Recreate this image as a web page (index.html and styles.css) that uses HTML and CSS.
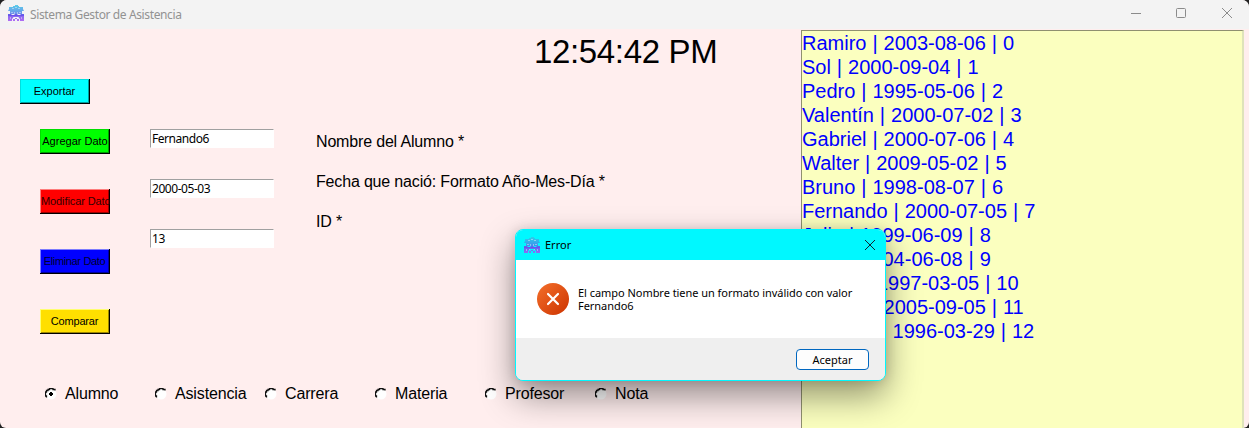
FILE: index.html
```
<!DOCTYPE html>
<html lang="es">
<head>
<meta charset="utf-8">
<title>Sistema Gestor de Asistencia</title>
<link rel="stylesheet" href="styles.css">
</head>
<body>
<svg class="defs" width="0" height="0" aria-hidden="true">
  <defs>
    <linearGradient id="roof" x1="0" y1="0" x2="0" y2="16" gradientUnits="userSpaceOnUse">
      <stop offset="0" stop-color="#35c5e5"/><stop offset=".5" stop-color="#4a80e8"/><stop offset=".65" stop-color="#6c50ec"/><stop offset="1" stop-color="#a555f4"/>
    </linearGradient>
    <linearGradient id="fail" x1="0" y1="0" x2="1" y2="1">
      <stop offset="0" stop-color="#f4702b"/><stop offset="1" stop-color="#cc3300"/>
    </linearGradient>
    <symbol id="house" viewBox="0 0 16 16">
      <g fill="url(#roof)">
        <path opacity=".8" d="M5 1h2V0h3v1h1v1h4v2l1 2h-2v3H2V6H0l1-2V2h4z"/>
        <path d="M0 9h3l1 1h2l1-1h2l1 1h2l1-1h3v2H0z"/>
        <path opacity=".85" d="M0 11h16v5h-4v-2l-2-2H6l-2 2v2H0z"/>
        <path opacity=".85" d="M5 14h2v2H5zM9 14h2v2H9zM7 13h2v1H7z"/>
      </g>
      <path fill="#fff" opacity=".4" d="M4 3h2v1H4zM10 3h2v1h-2zM7 2h2v1H7zM3 7h2v1H3zM6 7h1v2H6zM9 7h1v2H9zM11 7h2v1h-2zM2 12h1v2H2zM13 12h1v2h-1zM5 12h1v1H5zM10 12h1v1h-1z"/>
    </symbol>
    <symbol id="dial" viewBox="0 0 12 12">
      <circle cx="6" cy="6" r="5.500" fill="#fff"/>
      <path d="M1.5 9.500V8h-1V4h1V2.500H3V1.500h1.500V.7h3.500v.8h2v1" fill="none" stroke="#111" stroke-width="1.300"/>
    </symbol>
  </defs>
</svg>
<div class="window">
  <header class="titlebar">
    <svg class="app-icon"><use href="#house"/></svg>
    <span class="title">Sistema Gestor de Asistencia</span>
    <svg class="caption" width="104" height="12" viewBox="0 0 104 12" fill="none" stroke="#8b8b8b">
      <path d="M0 6.500h10"/>
      <rect x="45.500" y="1.500" width="9" height="9" rx="1"/>
      <path d="m91 1 10 10m0-10L91 11"/>
    </svg>
  </header>
  <main class="client">
    <section class="form">
      <div class="clock">12:54:42 PM</div>
      <button class="btn export">Exportar</button>
      <div class="editor">
        <div class="actions">
          <button class="btn add">Agregar Dato</button>
          <button class="btn modify">Modificar Dato</button>
          <button class="btn remove">Eliminar Dato</button>
          <button class="btn compare">Comparar</button>
        </div>
        <div class="entries">
          <div class="entry">Fernando6</div>
          <div class="entry">2000-05-03</div>
          <div class="entry">13</div>
        </div>
        <div class="labels">
          <span>Nombre del Alumno *</span>
          <span>Fecha que nació: Formato Año-Mes-Día *</span>
          <span>ID *</span>
        </div>
      </div>
      <div class="radios">
        <label class="radio"><svg class="dial" viewBox="0 0 12 12"><use href="#dial"/><path d="M5 4h2v1h1v2H7v1H5V7H4V5h1z"/></svg>Alumno</label>
        <label class="radio"><svg class="dial"><use href="#dial"/></svg>Asistencia</label>
        <label class="radio"><svg class="dial"><use href="#dial"/></svg>Carrera</label>
        <label class="radio"><svg class="dial"><use href="#dial"/></svg>Materia</label>
        <label class="radio"><svg class="dial"><use href="#dial"/></svg>Profesor</label>
        <label class="radio"><svg class="dial"><use href="#dial"/></svg>Nota</label>
      </div>
    </section>
    <ul class="list">
      <li>Ramiro | 2003-08-06 | 0</li>
      <li>Sol | 2000-09-04 | 1</li>
      <li>Pedro | 1995-05-06 | 2</li>
      <li>Valentín | 2000-07-02 | 3</li>
      <li>Gabriel | 2000-07-06 | 4</li>
      <li>Walter | 2009-05-02 | 5</li>
      <li>Bruno | 1998-08-07 | 6</li>
      <li>Fernando | 2000-07-05 | 7</li>
      <li>Julia | 1999-06-09 | 8</li>
      <li>Julia | 2004-06-08 | 9</li>
      <li>Carlos | 1997-03-05 | 10</li>
      <li>Ramiro | 2005-09-05 | 11</li>
      <li>Leandro | 1996-03-29 | 12</li>
    </ul>
  </main>
</div>
<div class="dialog" role="alertdialog">
  <div class="dialog-title">
    <svg class="app-icon"><use href="#house"/></svg>
    <span>Error</span>
    <svg class="close" width="12" height="12" viewBox="0 0 12 12" stroke="#123"><path d="m1 1 10 10m0-10L1 11"/></svg>
  </div>
  <div class="dialog-body">
    <svg width="32" height="32" viewBox="0 0 32 32"><circle cx="16" cy="16" r="16" fill="url(#fail)"/><path d="m11 11 10 10m0-10L11 21" stroke="#fff" stroke-width="2.200" stroke-linecap="round"/></svg>
    <p class="message">El campo Nombre tiene un formato inválido con valor<br>Fernando6</p>
  </div>
  <div class="dialog-foot"><button class="accept">Aceptar</button></div>
</div>
</body>
</html>
```
FILE: styles.css
```
* { box-sizing: border-box; }
body { margin: 0; background: #222; font-family: "Liberation Sans", Arial, sans-serif; color: #000; overflow: hidden; }
.defs { position: absolute; }
.window { width: 1249px; height: 428px; border-radius: 7px 7px 6px 6px; overflow: hidden; background: #ffeeee; }
.titlebar { height: 29px; background: #f3f3f3; display: flex; align-items: center; padding: 0 16px 3px 8px; font: 12px "Noto Sans", sans-serif; color: #929292; }
.app-icon { width: 16px; height: 16px; flex: none; }
.title { margin-left: 6px; letter-spacing: -0.38px; white-space: nowrap; padding-top: 2px; }
.caption { margin-left: auto; margin-right: -2px; }
.client { display: flex; height: 399px; padding-top: 1px; }
.form { width: 801px; flex: none; }
.clock { width: 182px; margin-left: 534px; height: 49px; line-height: 43px; font-size: 33px; letter-spacing: -0.35px; white-space: nowrap; }
.btn { display: flex; align-items: center; justify-content: center; width: 70px; height: 25px; padding: 0 1px 2px 0; border: 0; font: 11px "Liberation Sans", Arial, sans-serif; white-space: nowrap; overflow: hidden; color: #000; }
.export { margin-left: 20px; background: #00ffff; box-shadow: inset -1px -1px #000, inset 1px 1px #00dede, inset -2px -2px #009c9c; }
.add { background: #00ff00; box-shadow: inset -1px -1px #000, inset 1px 1px #00de00, inset -2px -2px #009c00; padding-right: 0; }
.modify { background: #ff0000; box-shadow: inset -1px -1px #000, inset 1px 1px #ff7c7c, inset -2px -2px #9c0000; color: #300; justify-content: flex-start; padding-left: 1px; letter-spacing: -0.1px; }
.remove { background: #0000ff; box-shadow: inset -1px -1px #000, inset 1px 1px #7c7cff, inset -2px -2px #00009c; color: #000030; letter-spacing: -0.35px; }
.compare { background: #ffdf00; box-shadow: inset -1px -1px #000, inset 1px 1px #ffff70, inset -2px -2px #9c8600; letter-spacing: -0.15px; }
.editor { display: flex; margin: 25px 0 0 40px; height: 253px; }
.actions { display: grid; gap: 35px; align-content: start; width: 110px; }
.entries { display: grid; gap: 31px; align-content: start; width: 166px; }
.entry { width: 124px; height: 19px; border: 1px solid #fff; border-top-color: #a0a0a0; border-left-color: #a0a0a0; background: #fff; font: 12px/18px "Noto Sans", sans-serif; padding-left: 1px; letter-spacing: -0.45px; }
.labels { display: grid; grid-auto-rows: 40px; margin-top: -7px; align-content: start; font-size: 16px; line-height: 40px; letter-spacing: -0.17px; white-space: nowrap; }
.radios { display: flex; padding-left: 45px; height: 24px; font-size: 16px; letter-spacing: -0.15px; }
.radio { width: 110px; display: flex; align-items: center; }
.dial { width: 12px; height: 12px; margin-right: 8px; }
.list { margin: 0; width: 443px; height: 398px; padding: 0; border: 1px solid #8f9070; border-right: 2px solid #dfe3ba; border-bottom: 0; background: #fbffbf; color: #0000ff; list-style: none; font-size: 20px; line-height: 24px; word-spacing: 0.4px; white-space: nowrap; }
.dialog { position: absolute; left: 515px; top: 229px; width: 371px; height: 152px; border: 1px solid #00f8ff; border-radius: 8px; overflow: hidden; background: #efefef; box-shadow: 0 15px 34px rgba(0,0,0,.42), 0 0 12px rgba(0,0,0,.12); font-family: "Noto Sans", sans-serif; font-size: 11px; }
.dialog-title { height: 30px; display: flex; align-items: center; background: #00f8ff; padding: 0 9px 1px 8px; }
.dialog-title span { margin-left: 5px; }
.dialog-title .close { margin-left: auto; }
.dialog-body { height: 78px; display: flex; align-items: flex-start; background: #fff; padding: 23px 0 0 21px; }
.message { margin: 3px 0 0 9px; line-height: 13px; letter-spacing: -0.04px; white-space: nowrap; }
.dialog-foot { height: 42px; display: flex; justify-content: flex-end; background: #efefef; padding: 11px 16px 0 0; }
.accept { width: 73px; height: 21px; border: 1px solid #0067c0; border-radius: 4px; background: #fdfdfd; color: #000; font: 11px "Noto Sans", sans-serif; padding: 0; }
```
